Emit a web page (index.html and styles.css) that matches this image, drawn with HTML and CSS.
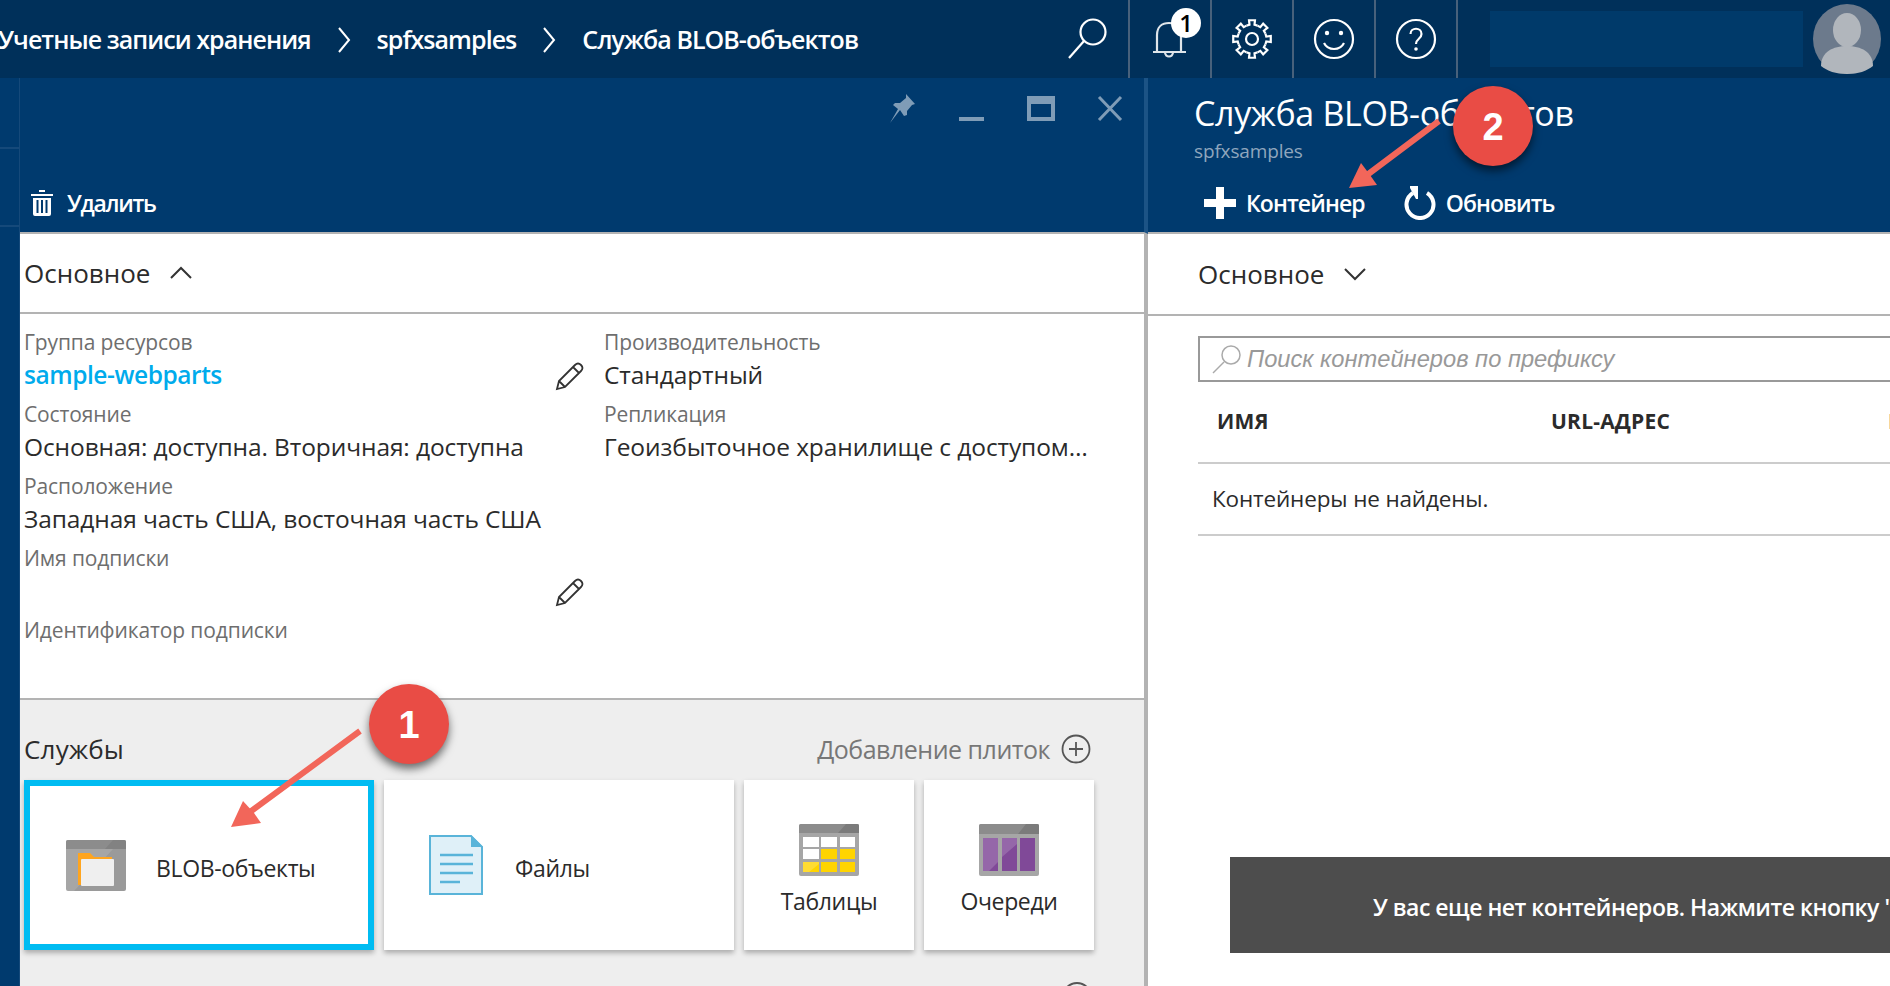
FILE: index.html
```html
<!DOCTYPE html>
<html lang="ru">
<head>
    <meta charset="UTF-8">
    <meta name="viewport" content="width=device-width, initial-scale=1.0">
    <title>Служба BLOB-объектов</title>
    <link rel="stylesheet" href="styles.css">
</head>
<body>
    <header class="topbar">
        <nav class="crumbs">
            <span class="crumb-first">Учетные записи хранения</span>
            <svg class="crumb-sep" viewBox="0 0 14 26"><path d="M2 1l10 12L2 25"/></svg>
            <span class="crumb-second">spfxsamples</span>
            <svg class="crumb-sep" viewBox="0 0 14 26"><path d="M2 1l10 12L2 25"/></svg>
            <span>Служба BLOB-объектов</span>
        </nav>
        <div class="top-icons">
            <div class="top-icon">
                <svg width="44" height="44" viewBox="0 0 44 44"><circle cx="27" cy="15" r="12.5"/><path d="M18 24L3 41"/></svg>
            </div>
            <div class="top-icon">
                <svg width="40" height="44" viewBox="0 0 40 44" class="bell"><path d="M1 35h33M5 35V18C5 10 10 6 17 6s12 4 12 12v17M13 35c0 6 8 6 8 0"/></svg>
                <span class="bell-count">1</span>
            </div>
            <div class="top-icon">
                <svg width="42" height="42" viewBox="-21 -21 42 42">
                    <defs><path id="gearTooth" d="M-5.55-13.4L-2.52-14.28-2.97-18.77 2.97-18.77 2.52-14.28 5.55-13.4"/></defs>
                    <use href="#gearTooth"/>
                    <use href="#gearTooth" transform="rotate(45)"/>
                    <use href="#gearTooth" transform="rotate(90)"/>
                    <use href="#gearTooth" transform="rotate(135)"/>
                    <use href="#gearTooth" transform="rotate(180)"/>
                    <use href="#gearTooth" transform="rotate(225)"/>
                    <use href="#gearTooth" transform="rotate(270)"/>
                    <use href="#gearTooth" transform="rotate(315)"/>
                    <circle r="6"/>
                </svg>
            </div>
            <div class="top-icon">
                <svg width="42" height="42" viewBox="0 0 42 42"><circle cx="21" cy="21" r="19"/><path d="M11 25c4 8 16 8 20 0"/><circle class="dot" cx="14" cy="15" r="2.2"/><circle class="dot" cx="28" cy="15" r="2.2"/></svg>
            </div>
            <div class="top-icon">
                <svg width="42" height="42" viewBox="0 0 42 42"><circle cx="21" cy="21" r="19"/><path d="M15.5 16c0-7 11-7 11 0 0 5-5.500 4.500-5.500 10"/><circle class="dot" cx="21" cy="31" r="1.800"/></svg>
            </div>
        </div>
        <div class="top-search"></div>
        <svg class="avatar" width="68" height="70" viewBox="0 0 68 70">
            <ellipse cx="34" cy="35" rx="34" ry="35" fill="#6c7a8c"/>
            <ellipse cx="34" cy="26" rx="14" ry="17" fill="#b1b6bc"/>
            <path d="M8 62c0-14 12-20 26-20s26 6 26 20c-6 5-15 8-26 8S14 67 8 62z" fill="#b1b6bc"/>
        </svg>
    </header>

    <main class="workspace">
        <div class="rail">
            <div class="rail-item"></div>
        </div>

        <section class="blade blade-account">
            <div class="blade-head">
                <div class="blade-controls">
                    <svg width="30" height="30" viewBox="0 0 30 30"><path class="solid" d="M18 1l9 10-3 1-5 6 0 4-3 1-4-6-10 13 8-14-5-4 2-2 5 0 6-5z"/></svg>
                    <svg width="26" height="30" viewBox="0 0 26 30"><path class="solid" d="M0 24h25v4H0z"/></svg>
                    <svg width="30" height="30" viewBox="0 0 30 30"><path class="solid" fill-rule="evenodd" d="M1 3h28v25H1zM5 11v13h20V11z"/></svg>
                    <svg width="26" height="30" viewBox="0 0 26 30"><path class="line" d="M2 4l22 23M24 4L2 27"/></svg>
                </div>
                <div class="commands">
                    <button class="command command-delete">
                        <svg width="22" height="28" viewBox="0 0 22 28"><path class="solid" fill-rule="evenodd" d="M0 5h22v2H0zM8 1h6v2H8zM2 9h18v16a2 2 0 0 1-2 2H4a2 2 0 0 1-2-2zM5.500 11v13h2V11zM10 11v13h2V11zM14.500 11v13h2V11z"/></svg>
                        Удалить
                    </button>
                </div>
            </div>

            <div class="section-toggle">
                <span>Основное</span>
                <svg width="22" height="14" viewBox="0 0 22 14"><path d="M1 12L11 2l10 10"/></svg>
            </div>

            <div class="details">
                <div class="details-col">
                    <div class="field">
                        <div class="field-label">Группа ресурсов</div>
                        <div class="field-value">
                            <a class="link" href="#">sample-webparts</a>
                            <svg class="pencil" width="30" height="30" viewBox="0 0 30 30"><path d="M2 28l2-8L20 4c2-2 4-2 6 0s2 4 0 6L10 26zM4 20l6 6M18 6l6 6"/></svg>
                        </div>
                    </div>
                    <div class="field">
                        <div class="field-label">Состояние</div>
                        <div class="field-value">Основная: доступна. Вторичная: доступна</div>
                    </div>
                    <div class="field">
                        <div class="field-label">Расположение</div>
                        <div class="field-value">Западная часть США, восточная часть США</div>
                    </div>
                    <div class="field">
                        <div class="field-label">Имя подписки</div>
                        <div class="field-value field-value-end">
                            <svg class="pencil" width="30" height="30" viewBox="0 0 30 30"><path d="M2 28l2-8L20 4c2-2 4-2 6 0s2 4 0 6L10 26zM4 20l6 6M18 6l6 6"/></svg>
                        </div>
                    </div>
                    <div class="field">
                        <div class="field-label">Идентификатор подписки</div>
                    </div>
                </div>
                <div class="details-col">
                    <div class="field">
                        <div class="field-label">Производительность</div>
                        <div class="field-value">Стандартный</div>
                    </div>
                    <div class="field">
                        <div class="field-label">Репликация</div>
                        <div class="field-value">Геоизбыточное хранилище с доступом…</div>
                    </div>
                </div>
            </div>

            <div class="services">
                <div class="services-head">
                    <span class="services-title">Службы</span>
                    <span class="add-tiles">
                        Добавление плиток
                        <svg width="30" height="30" viewBox="0 0 30 30"><circle cx="15" cy="15" r="13.500"/><path d="M15 8v14M8 15h14"/></svg>
                    </span>
                </div>
                <div class="tiles">
                    <div class="tile tile-wide tile-active">
                        <svg width="60" height="51" viewBox="0 0 60 51">
                            <rect width="60" height="51" rx="2" fill="#a6a6a6"/>
                            <path d="M2 0h56a2 2 0 0 1 2 2v7H0V2a2 2 0 0 1 2-2z" fill="#8c8c8c"/>
                            <path d="M47 0h13v9h-21zM8 51L47 9H60v40a2 2 0 0 1-2 2z" fill="#000" opacity=".07"/>
                            <path d="M12 13h12l4 4h18v28H12z" fill="#ffa51f"/>
                            <rect x="15" y="19" width="33" height="27" rx="1" fill="#efefef"/>
                        </svg>
                        <span>BLOB-объекты</span>
                    </div>
                    <div class="tile tile-wide tile-files">
                        <svg width="54" height="60" viewBox="0 0 54 60">
                            <path d="M1 1h41l11 11v47H1z" fill="#dff0f8" stroke="#59b4d9" stroke-width="2"/>
                            <path d="M42 0l12 12H42z" fill="#59b4d9"/>
                            <path d="M11 20h33M11 29h33M11 38h33M11 47h20" stroke="#59b4d9" stroke-width="2.500"/>
                        </svg>
                        <span>Файлы</span>
                    </div>
                    <div class="tile tile-small">
                        <svg width="60" height="52" viewBox="0 0 60 52">
                            <rect width="60" height="52" rx="2" fill="#a6a6a6"/>
                            <path d="M2 0h56a2 2 0 0 1 2 2v7H0V2a2 2 0 0 1 2-2z" fill="#8c8c8c"/>
                            <path d="M47 0h13v9H39z" fill="#000" opacity=".12"/>
                            <path d="M4 13h16v10H4zM22 13h16v10H22zM41 13h15v10H41zM4 25h16v10H4z" fill="#fff"/>
                            <path d="M22 25h16v10H22zM41 25h15v10H41zM4 38h16v10H4zM22 38h16v10H22zM41 38h15v10H41z" fill="#ffd400"/>
                            <path d="M4 38h16v2L10 48H4z" fill="#fff" opacity=".2"/>
                        </svg>
                        <span>Таблицы</span>
                    </div>
                    <div class="tile tile-small">
                        <svg width="60" height="52" viewBox="0 0 60 52">
                            <rect width="60" height="52" rx="2" fill="#a6a6a6"/>
                            <path d="M2 0h56a2 2 0 0 1 2 2v8H0V2a2 2 0 0 1 2-2z" fill="#8c8c8c"/>
                            <path d="M47 0h13v10H39z" fill="#000" opacity=".12"/>
                            <path d="M4 14h15v33H4zM23 14h15v33H23zM41 14h15v33H41z" fill="#804998"/>
                            <path d="M4 14h15v24l-9 9H4zM23 14h15v6L23 33z" fill="#fff" opacity=".17"/>
                        </svg>
                        <span>Очереди</span>
                    </div>
                </div>
                <div class="services-more"></div>
            </div>
        </section>

        <section class="blade blade-blobs">
            <div class="blade-head">
                <h1 class="blade-title">Служба BLOB-объектов</h1>
                <div class="blade-subtitle">spfxsamples</div>
                <div class="commands">
                    <button class="command command-add">
                        <svg width="32" height="32" viewBox="0 0 32 32"><path class="solid" d="M12 0h8v12h12v8H20v12h-8V20H0v-8h12z"/></svg>
                        Контейнер
                    </button>
                    <button class="command command-refresh">
                        <svg width="32" height="34" viewBox="0 0 32 34"><path class="line" d="M9 7a13.500 13.500 0 1 0 14 0"/><path class="solid" d="M6 0h8v13l-2 0-6-11z"/></svg>
                        Обновить
                    </button>
                </div>
            </div>

            <div class="section-toggle section-toggle-right">
                <span>Основное</span>
                <svg width="22" height="14" viewBox="0 0 22 14"><path d="M1 2l10 10L21 2"/></svg>
            </div>

            <div class="blob-body">
                <div class="search-box">
                    <svg width="30" height="30" viewBox="0 0 30 30"><circle cx="19" cy="11" r="9"/><path d="M12 18L1 29"/></svg>
                    <span>Поиск контейнеров по префиксу</span>
                </div>
                <div class="table-row table-head">
                    <span>ИМЯ</span>
                    <span>URL-АДРЕС</span>
                    <span>ПОСЛЕДНЕЕ ИЗМЕНЕНИЕ</span>
                </div>
                <div class="table-empty">Контейнеры не найдены.</div>
                <div class="hint">У вас еще нет контейнеров. Нажмите кнопку "+ Контейнер", чтобы начать работу.</div>
            </div>
        </section>
    </main>

    <svg class="arrows" width="1890" height="986" viewBox="0 0 1890 986">
        <path d="M360 731L250 812M1439 121L1367 175" stroke="#f2665a" stroke-width="6"/>
        <path d="M231 827L243 801 254 813 261 823z" fill="#f2665a"/>
        <path d="M1349 188L1361 163 1370 175 1377 185z" fill="#f2665a"/>
    </svg>
    <div class="step step-one">1</div>
    <div class="step step-two">2</div>
</body>
</html>
```

FILE: styles.css
```css
* {
    box-sizing: border-box;
}
html, body {
    height: 100%;
}
body {
    font-family: "Open Sans", "Liberation Sans", sans-serif;
    color: #2b2b2b;
    background-color: #ffffff;
    margin: 0;
    overflow: hidden;
    position: relative;
}
svg {
    display: block;
    flex: none;
    fill: none;
}
button {
    font-family: inherit;
    background: none;
    border: none;
    padding: 0;
    color: inherit;
}

/* top bar */
.topbar {
    height: 78px;
    background-color: #00305a;
    display: flex;
    align-items: center;
    color: #ffffff;
}
.crumbs {
    width: 1050px;
    flex: none;
    margin-left: -2px;
    display: flex;
    align-items: center;
    font-size: 25px;
    font-weight: 600;
    letter-spacing: -0.95px;
    white-space: nowrap;
}
.crumb-sep {
    width: 14px;
    height: 26px;
    margin: 2px 26px 0 26px;
    stroke: #ffffff;
    stroke-width: 2;
}
.top-icons {
    display: flex;
    height: 78px;
    width: 410px;
    flex: none;
}
.top-icon {
    width: 82px;
    display: flex;
    align-items: center;
    justify-content: center;
    position: relative;
    border-right: 2px solid #48617b;
    stroke: #ffffff;
}
.top-icon svg {
    stroke: #ffffff;
    stroke-width: 2.200;
}
.top-icon .dot {
    fill: #ffffff;
    stroke: none;
}
.top-icon .bell {
    margin-left: 4px;
    stroke: #dfe5ea;
}
.bell-count {
    position: absolute;
    top: 8px;
    left: 41px;
    width: 30px;
    height: 30px;
    border-radius: 50%;
    background-color: #ffffff;
    color: #000000;
    font-size: 24px;
    font-weight: 600;
    line-height: 30px;
    text-align: center;
}
.top-search {
    width: 313px;
    height: 56px;
    margin-left: 32px;
    background-color: #003a6a;
}
.avatar {
    margin-left: 10px;
}

/* page body */
.workspace {
    display: flex;
    height: 908px;
}
.rail {
    width: 20px;
    flex: none;
    background-color: #003a6e;
    border-right: 1px solid #15497a;
    padding-top: 69px;
}
.rail-item {
    height: 80px;
    border-top: 2px solid #15497a;
    border-bottom: 2px solid #15497a;
}
.blade {
    display: flex;
    flex-direction: column;
}
.blade > * {
    flex: none;
}
.blade-account {
    width: 1128px;
    flex: none;
    border-right: 4px solid #b3b3b3;
}
.blade-blobs {
    flex: 1;
    min-width: 0;
    overflow: hidden;
}
.blade-head {
    height: 156px;
    background-color: #003a6e;
    border-bottom: 2px solid #b3b3b3;
    display: flex;
    flex-direction: column;
    color: #ffffff;
}
.blade-account .blade-head {
    margin-right: -4px;
    border-right: 4px solid #1c5385;
}
.blade-controls {
    display: flex;
    justify-content: flex-end;
    gap: 41px;
    padding: 15px 21px 0 0;
}
.blade-controls .solid {
    fill: #7f9cb7;
}
.blade-controls .line {
    stroke: #7f9cb7;
    stroke-width: 3;
}
.commands {
    margin-top: auto;
    height: 36px;
    margin-bottom: 11px;
    display: flex;
    align-items: center;
    padding-left: 11px;
    gap: 39px;
}
.command {
    display: flex;
    align-items: center;
    gap: 14px;
    font-size: 23px;
    font-weight: 600;
    letter-spacing: -0.9px;
    color: #ffffff;
}
.command .solid {
    fill: #ffffff;
}
.command .line {
    stroke: #ffffff;
    stroke-width: 4;
}
.command-delete {
    letter-spacing: -1.3px;
}
.command-add {
    gap: 10px;
}
.command-refresh {
    gap: 10px;
}
.blade-title {
    margin: 13px 0 0 46px;
    font-size: 34px;
    font-weight: 400;
    line-height: 44px;
    letter-spacing: -0.35px;
    white-space: nowrap;
}
.blade-subtitle {
    margin: 4px 0 0 46px;
    font-size: 19px;
    line-height: 24px;
    letter-spacing: -0.15px;
    color: #8fa6bd;
}
.blade-blobs .commands {
    padding-left: 56px;
}
.section-toggle {
    height: 80px;
    border-bottom: 2px solid #b3b3b3;
    padding-left: 4px;
    display: flex;
    align-items: center;
    gap: 20px;
    font-size: 26px;
}
.section-toggle svg {
    stroke: #333333;
    stroke-width: 2;
}
.section-toggle-right {
    height: 82px;
    padding-left: 50px;
}

/* essentials */
.details {
    height: 384px;
    padding: 13px 0 0 4px;
    display: flex;
}
.details-col {
    width: 580px;
    flex: none;
}
.field {
    height: 72px;
}
.field-label {
    font-size: 21px;
    line-height: 30px;
    letter-spacing: -0.12px;
    color: #6e6e6e;
}
.field-value {
    height: 34px;
    padding-right: 19px;
    display: flex;
    align-items: center;
    justify-content: space-between;
    font-size: 24.500px;
    letter-spacing: -0.1px;
    white-space: nowrap;
}
.field-value-end {
    justify-content: flex-end;
}
.link {
    color: #00abec;
    font-weight: 600;
    letter-spacing: -0.45px;
    text-decoration: none;
}
.pencil {
    margin-top: 4px;
    stroke: #333333;
    stroke-width: 1.800;
}

/* services */
.services {
    flex: 1 !important;
    min-height: 0;
    overflow: hidden;
    background-color: #eeeeee;
    border-top: 2px solid #b3b3b3;
    padding-left: 4px;
}
.services-head {
    width: 1067px;
    height: 80px;
    padding-top: 18px;
    display: flex;
    justify-content: space-between;
    align-items: center;
}
.services-title {
    font-size: 26px;
    letter-spacing: 0.2px;
}
.add-tiles {
    display: flex;
    align-items: center;
    gap: 11px;
    font-size: 25px;
    letter-spacing: -0.5px;
    color: #777777;
}
.add-tiles svg {
    stroke: #555555;
    stroke-width: 1.800;
}
.tiles {
    display: flex;
    gap: 10px;
}
.tile {
    height: 170px;
    flex: none;
    background-color: #ffffff;
    box-shadow: 0 3px 5px rgba(0, 0, 0, 0.28);
    font-size: 23px;
    letter-spacing: -0.35px;
}
.tile-wide {
    width: 350px;
    display: flex;
    align-items: center;
}
.tile-wide span {
    padding-top: 5px;
}
.tile-active {
    border: 6px solid #00bcf2;
    padding-left: 36px;
    gap: 30px;
}
.tile-files {
    padding-left: 45px;
    gap: 32px;
}
.tile-small {
    width: 170px;
    padding-top: 44px;
    display: flex;
    flex-direction: column;
    align-items: center;
    gap: 9px;
}
.services-more {
    width: 30px;
    height: 30px;
    margin: 32px 0 0 1038px;
    border: 2px solid #555555;
    border-radius: 50%;
}

/* blob list */
.blob-body {
    width: 900px;
    padding: 20px 0 0 50px;
}
.search-box {
    height: 46px;
    border: 2px solid #999999;
    padding-left: 12px;
    display: flex;
    align-items: center;
    gap: 5px;
    font-family: "Liberation Sans", sans-serif;
    font-size: 23.700px;
    font-style: italic;
    color: #999999;
}
.search-box svg {
    stroke: #aaaaaa;
    stroke-width: 1.500;
}
.table-row {
    display: grid;
    grid-template-columns: 334px 337px 1fr;
    padding-left: 19px;
    white-space: nowrap;
}
.table-head {
    height: 82px;
    padding-bottom: 2px;
    align-items: center;
    border-bottom: 2px solid #cccccc;
    font-size: 21px;
    font-weight: 700;
    letter-spacing: 0.2px;
}
.table-empty {
    height: 72px;
    padding-left: 14px;
    line-height: 70px;
    border-bottom: 2px solid #cccccc;
    font-size: 22.500px;
    letter-spacing: -0.15px;
}
.hint {
    height: 96px;
    margin: 321px 0 0 32px;
    padding-left: 143px;
    background-color: #4d4d4d;
    color: #ffffff;
    font-size: 23px;
    font-weight: 600;
    letter-spacing: -0.5px;
    line-height: 100px;
    white-space: nowrap;
}

/* annotations drawn over the screenshot */
.arrows {
    position: absolute;
    top: 0;
    left: 0;
    pointer-events: none;
}
.step {
    position: absolute;
    width: 80px;
    height: 80px;
    border-radius: 50%;
    background-color: #e94c45;
    color: #ffffff;
    font-family: "Liberation Sans", sans-serif;
    font-size: 38px;
    font-weight: 700;
    line-height: 82px;
    text-align: center;
    box-shadow: 0 5px 8px rgba(0, 0, 0, 0.55);
}
.step-one {
    top: 684px;
    left: 369px;
}
.step-two {
    top: 86px;
    left: 1453px;
}
```
